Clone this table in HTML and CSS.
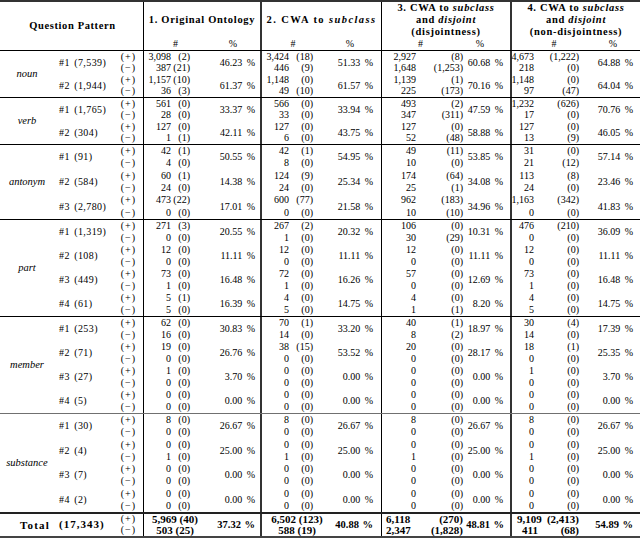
FILE: index.html
```html
<!DOCTYPE html>
<html>
<head>
<meta charset="utf-8">
<link rel="stylesheet" href="styles.css">
</head>
<body>
<div class="tbl" role="table">
<!-- header -->
<div class="qp">Question Pattern</div>
<div class="g n1"><div class="ht">1. Original Ontology</div></div>
<div class="g g2 n2"><div class="ht">2. CWA to <i>subclass</i></div></div>
<div class="g n3"><div class="ht">3. CWA to <i>subclass</i><br>and <i>disjoint</i><br>(disjointness)</div></div>
<div class="g n4"><div class="ht">4. CWA to <i>subclass</i><br>and <i>disjoint</i><br>(non-disjointness)</div></div>
<div class="hh n1 hh1">#</div><div class="hp hp1">%</div>
<div class="hh n2 hh2">#</div><div class="hp hp2">%</div>
<div class="hh n3 hh3">#</div><div class="hp hp3">%</div>
<div class="hh n4 hh4">#</div><div class="hp hp4">%</div>
<div class="hr"></div>

<!-- noun -->
<div class="cat r4">noun</div>
<div class="pat">#1 (7,539)</div><div class="sg">(+)</div><div class="n1">3,098</div><div class="p">(2)</div><div class="c1">46.23 %</div><div class="n2">3,424</div><div class="p">(18)</div><div class="c2">51.33 %</div><div class="n3">2,927</div><div class="p">(8)</div><div class="c3">60.68 %</div><div class="n4">4,673</div><div class="p">(1,222)</div><div class="c4">64.88 %</div>
<div class="sg">(−)</div><div class="n1">387</div><div class="p">(21)</div><div class="n2">446</div><div class="p">(9)</div><div class="n3">1,648</div><div class="p">(1,253)</div><div class="n4">218</div><div class="p">(0)</div>
<div class="pat">#2 (1,944)</div><div class="sg">(+)</div><div class="n1">1,157</div><div class="p">(10)</div><div class="c1">61.37 %</div><div class="n2">1,148</div><div class="p">(0)</div><div class="c2">61.57 %</div><div class="n3">1,139</div><div class="p">(1)</div><div class="c3">70.16 %</div><div class="n4">1,148</div><div class="p">(0)</div><div class="c4">64.04 %</div>
<div class="sg">(−)</div><div class="n1">36</div><div class="p">(3)</div><div class="n2">49</div><div class="p">(10)</div><div class="n3">225</div><div class="p">(173)</div><div class="n4">97</div><div class="p">(47)</div>
<div class="hr"></div>

<!-- verb -->
<div class="cat r4">verb</div>
<div class="pat">#1 (1,765)</div><div class="sg">(+)</div><div class="n1">561</div><div class="p">(0)</div><div class="c1">33.37 %</div><div class="n2">566</div><div class="p">(0)</div><div class="c2">33.94 %</div><div class="n3">493</div><div class="p">(2)</div><div class="c3">47.59 %</div><div class="n4">1,232</div><div class="p">(626)</div><div class="c4">70.76 %</div>
<div class="sg">(−)</div><div class="n1">28</div><div class="p">(0)</div><div class="n2">33</div><div class="p">(0)</div><div class="n3">347</div><div class="p">(311)</div><div class="n4">17</div><div class="p">(0)</div>
<div class="pat">#2 (304)</div><div class="sg">(+)</div><div class="n1">127</div><div class="p">(0)</div><div class="c1">42.11 %</div><div class="n2">127</div><div class="p">(0)</div><div class="c2">43.75 %</div><div class="n3">127</div><div class="p">(0)</div><div class="c3">58.88 %</div><div class="n4">127</div><div class="p">(0)</div><div class="c4">46.05 %</div>
<div class="sg">(−)</div><div class="n1">1</div><div class="p">(1)</div><div class="n2">6</div><div class="p">(0)</div><div class="n3">52</div><div class="p">(48)</div><div class="n4">13</div><div class="p">(9)</div>
<div class="hr"></div>

<!-- antonym -->
<div class="cat r6">antonym</div>
<div class="pat">#1 (91)</div><div class="sg">(+)</div><div class="n1">42</div><div class="p">(1)</div><div class="c1">50.55 %</div><div class="n2">42</div><div class="p">(1)</div><div class="c2">54.95 %</div><div class="n3">49</div><div class="p">(11)</div><div class="c3">53.85 %</div><div class="n4">31</div><div class="p">(0)</div><div class="c4">57.14 %</div>
<div class="sg">(−)</div><div class="n1">4</div><div class="p">(0)</div><div class="n2">8</div><div class="p">(0)</div><div class="n3">10</div><div class="p">(0)</div><div class="n4">21</div><div class="p">(12)</div>
<div class="pat">#2 (584)</div><div class="sg">(+)</div><div class="n1">60</div><div class="p">(1)</div><div class="c1">14.38 %</div><div class="n2">124</div><div class="p">(9)</div><div class="c2">25.34 %</div><div class="n3">174</div><div class="p">(64)</div><div class="c3">34.08 %</div><div class="n4">113</div><div class="p">(8)</div><div class="c4">23.46 %</div>
<div class="sg">(−)</div><div class="n1">24</div><div class="p">(0)</div><div class="n2">24</div><div class="p">(0)</div><div class="n3">25</div><div class="p">(1)</div><div class="n4">24</div><div class="p">(0)</div>
<div class="pat">#3 (2,780)</div><div class="sg">(+)</div><div class="n1">473</div><div class="p">(22)</div><div class="c1">17.01 %</div><div class="n2">600</div><div class="p">(77)</div><div class="c2">21.58 %</div><div class="n3">962</div><div class="p">(183)</div><div class="c3">34.96 %</div><div class="n4">1,163</div><div class="p">(342)</div><div class="c4">41.83 %</div>
<div class="sg">(−)</div><div class="n1">0</div><div class="p">(0)</div><div class="n2">0</div><div class="p">(0)</div><div class="n3">10</div><div class="p">(10)</div><div class="n4">0</div><div class="p">(0)</div>
<div class="hr"></div>

<!-- part -->
<div class="cat r8">part</div>
<div class="pat">#1 (1,319)</div><div class="sg">(+)</div><div class="n1">271</div><div class="p">(3)</div><div class="c1">20.55 %</div><div class="n2">267</div><div class="p">(2)</div><div class="c2">20.32 %</div><div class="n3">106</div><div class="p">(0)</div><div class="c3">10.31 %</div><div class="n4">476</div><div class="p">(210)</div><div class="c4">36.09 %</div>
<div class="sg">(−)</div><div class="n1">0</div><div class="p">(0)</div><div class="n2">1</div><div class="p">(0)</div><div class="n3">30</div><div class="p">(29)</div><div class="n4">0</div><div class="p">(0)</div>
<div class="pat">#2 (108)</div><div class="sg">(+)</div><div class="n1">12</div><div class="p">(0)</div><div class="c1">11.11 %</div><div class="n2">12</div><div class="p">(0)</div><div class="c2">11.11 %</div><div class="n3">12</div><div class="p">(0)</div><div class="c3">11.11 %</div><div class="n4">12</div><div class="p">(0)</div><div class="c4">11.11 %</div>
<div class="sg">(−)</div><div class="n1">0</div><div class="p">(0)</div><div class="n2">0</div><div class="p">(0)</div><div class="n3">0</div><div class="p">(0)</div><div class="n4">0</div><div class="p">(0)</div>
<div class="pat">#3 (449)</div><div class="sg">(+)</div><div class="n1">73</div><div class="p">(0)</div><div class="c1">16.48 %</div><div class="n2">72</div><div class="p">(0)</div><div class="c2">16.26 %</div><div class="n3">57</div><div class="p">(0)</div><div class="c3">12.69 %</div><div class="n4">73</div><div class="p">(0)</div><div class="c4">16.48 %</div>
<div class="sg">(−)</div><div class="n1">1</div><div class="p">(0)</div><div class="n2">1</div><div class="p">(0)</div><div class="n3">0</div><div class="p">(0)</div><div class="n4">1</div><div class="p">(0)</div>
<div class="pat">#4 (61)</div><div class="sg">(+)</div><div class="n1">5</div><div class="p">(1)</div><div class="c1">16.39 %</div><div class="n2">4</div><div class="p">(0)</div><div class="c2">14.75 %</div><div class="n3">4</div><div class="p">(0)</div><div class="c3">8.20 %</div><div class="n4">4</div><div class="p">(0)</div><div class="c4">14.75 %</div>
<div class="sg">(−)</div><div class="n1">5</div><div class="p">(0)</div><div class="n2">5</div><div class="p">(0)</div><div class="n3">1</div><div class="p">(1)</div><div class="n4">5</div><div class="p">(0)</div>
<div class="hr"></div>

<!-- member -->
<div class="cat r8">member</div>
<div class="pat">#1 (253)</div><div class="sg">(+)</div><div class="n1">62</div><div class="p">(0)</div><div class="c1">30.83 %</div><div class="n2">70</div><div class="p">(1)</div><div class="c2">33.20 %</div><div class="n3">40</div><div class="p">(1)</div><div class="c3">18.97 %</div><div class="n4">30</div><div class="p">(4)</div><div class="c4">17.39 %</div>
<div class="sg">(−)</div><div class="n1">16</div><div class="p">(0)</div><div class="n2">14</div><div class="p">(0)</div><div class="n3">8</div><div class="p">(2)</div><div class="n4">14</div><div class="p">(0)</div>
<div class="pat">#2 (71)</div><div class="sg">(+)</div><div class="n1">19</div><div class="p">(0)</div><div class="c1">26.76 %</div><div class="n2">38</div><div class="p">(15)</div><div class="c2">53.52 %</div><div class="n3">20</div><div class="p">(0)</div><div class="c3">28.17 %</div><div class="n4">18</div><div class="p">(1)</div><div class="c4">25.35 %</div>
<div class="sg">(−)</div><div class="n1">0</div><div class="p">(0)</div><div class="n2">0</div><div class="p">(0)</div><div class="n3">0</div><div class="p">(0)</div><div class="n4">0</div><div class="p">(0)</div>
<div class="pat">#3 (27)</div><div class="sg">(+)</div><div class="n1">1</div><div class="p">(0)</div><div class="c1">3.70 %</div><div class="n2">0</div><div class="p">(0)</div><div class="c2">0.00 %</div><div class="n3">0</div><div class="p">(0)</div><div class="c3">0.00 %</div><div class="n4">1</div><div class="p">(0)</div><div class="c4">3.70 %</div>
<div class="sg">(−)</div><div class="n1">0</div><div class="p">(0)</div><div class="n2">0</div><div class="p">(0)</div><div class="n3">0</div><div class="p">(0)</div><div class="n4">0</div><div class="p">(0)</div>
<div class="pat">#4 (5)</div><div class="sg">(+)</div><div class="n1">0</div><div class="p">(0)</div><div class="c1">0.00 %</div><div class="n2">0</div><div class="p">(0)</div><div class="c2">0.00 %</div><div class="n3">0</div><div class="p">(0)</div><div class="c3">0.00 %</div><div class="n4">0</div><div class="p">(0)</div><div class="c4">0.00 %</div>
<div class="sg">(−)</div><div class="n1">0</div><div class="p">(0)</div><div class="n2">0</div><div class="p">(0)</div><div class="n3">0</div><div class="p">(0)</div><div class="n4">0</div><div class="p">(0)</div>
<div class="hr lt"></div>

<!-- substance -->
<div class="cat r8">substance</div>
<div class="pat">#1 (30)</div><div class="sg">(+)</div><div class="n1">8</div><div class="p">(0)</div><div class="c1">26.67 %</div><div class="n2">8</div><div class="p">(0)</div><div class="c2">26.67 %</div><div class="n3">8</div><div class="p">(0)</div><div class="c3">26.67 %</div><div class="n4">8</div><div class="p">(0)</div><div class="c4">26.67 %</div>
<div class="sg">(−)</div><div class="n1">0</div><div class="p">(0)</div><div class="n2">0</div><div class="p">(0)</div><div class="n3">0</div><div class="p">(0)</div><div class="n4">0</div><div class="p">(0)</div>
<div class="pat">#2 (4)</div><div class="sg">(+)</div><div class="n1">0</div><div class="p">(0)</div><div class="c1">25.00 %</div><div class="n2">0</div><div class="p">(0)</div><div class="c2">25.00 %</div><div class="n3">0</div><div class="p">(0)</div><div class="c3">25.00 %</div><div class="n4">0</div><div class="p">(0)</div><div class="c4">25.00 %</div>
<div class="sg">(−)</div><div class="n1">1</div><div class="p">(0)</div><div class="n2">1</div><div class="p">(0)</div><div class="n3">1</div><div class="p">(0)</div><div class="n4">1</div><div class="p">(0)</div>
<div class="pat">#3 (7)</div><div class="sg">(+)</div><div class="n1">0</div><div class="p">(0)</div><div class="c1">0.00 %</div><div class="n2">0</div><div class="p">(0)</div><div class="c2">0.00 %</div><div class="n3">0</div><div class="p">(0)</div><div class="c3">0.00 %</div><div class="n4">0</div><div class="p">(0)</div><div class="c4">0.00 %</div>
<div class="sg">(−)</div><div class="n1">0</div><div class="p">(0)</div><div class="n2">0</div><div class="p">(0)</div><div class="n3">0</div><div class="p">(0)</div><div class="n4">0</div><div class="p">(0)</div>
<div class="pat">#4 (2)</div><div class="sg">(+)</div><div class="n1">0</div><div class="p">(0)</div><div class="c1">0.00 %</div><div class="n2">0</div><div class="p">(0)</div><div class="c2">0.00 %</div><div class="n3">0</div><div class="p">(0)</div><div class="c3">0.00 %</div><div class="n4">0</div><div class="p">(0)</div><div class="c4">0.00 %</div>
<div class="sg">(−)</div><div class="n1">0</div><div class="p">(0)</div><div class="n2">0</div><div class="p">(0)</div><div class="n3">0</div><div class="p">(0)</div><div class="n4">0</div><div class="p">(0)</div>
<div class="hr tk"></div>

<!-- total -->
<div class="cat-t">Total</div>
<div class="pat b tpat">(17,343)</div><div class="sg">(+)</div><div class="n1 k2 t1 b">5,969 (40)</div><div class="c1 b tp">37.32 %</div><div class="n2 k2 t2 b">6,502 (123)</div><div class="c2 b tp">40.88 %</div><div class="n3 k2 tt3 b"><span>6,118</span><span>(270)</span></div><div class="c3 b tp">48.81 %</div><div class="n4 k2 tt4 b"><span>9,109</span><span>(2,413)</span></div><div class="c4 b tp">54.89 %</div>
<div class="sg">(−)</div><div class="n1 k2 t1 b">503 (25)</div><div class="n2 k2 t2 b">588 (19)</div><div class="n3 k2 tt3 b"><span>2,347</span><span>(1,828)</span></div><div class="n4 k2 tt4 tt4b b"><span>411</span><span>(68)</span></div>
</div>
</body>
</html>
```

FILE: styles.css
```css
html, body {
  margin: 0;
  padding: 0;
  background: #fff;
}
body {
  width: 640px;
  height: 538px;
  overflow: hidden;
  font-family: "Liberation Serif", "Times New Roman", serif;
  color: #000;
}
.tbl {
  display: grid;
  width: 640px;
  grid-template-columns: 54px 58px 31px 28px 21px 68px 29px 26px 66px 35px 49px 45px 24px 47px 59px;
  grid-template-rows:
    36px 12px 1px
    repeat(4, 11.5px) 1px
    repeat(4, 11.5px) 1px
    repeat(6, 12.33px) 1px
    repeat(8, 12px) 1px
    repeat(8, 12px) 1px
    repeat(8, 12.25px) 2px
    11px 11px;
  border-top: 2px solid #333;
  border-bottom: 2px solid #444;
  font-size: 10px;
  line-height: 12px;
}
.tbl > div {
  display: flex;
  align-items: center;
  box-sizing: border-box;
  white-space: nowrap;
  min-width: 0;
}

/* rules */
.tbl > .hr {
  grid-column: 1 / -1;
  background: #000;
}
.tbl > .hr.lt { background: #707070; }
.tbl > .hr.tk { background: #222; }

/* body cells */
.cat {
  justify-content: center;
  font-style: italic;
  font-size: 10.5px;
}
.r4 { grid-row: span 4; }
.r6 { grid-row: span 6; }
.r8 { grid-row: span 8; }
.pat {
  grid-row: span 2;
  justify-content: flex-start;
  padding-left: 5px;
  letter-spacing: 0.4px;
  word-spacing: 1.5px;
}
.sg {
  justify-content: flex-end;
  padding-right: 7px;
  letter-spacing: 1px;
}
.n1, .n2, .n3, .n4 { justify-content: flex-end; }
.n1, .n3 { border-left: 1px solid #000; }
.n2, .n4 { border-left: 2px solid #333; }
.p { justify-content: flex-end; padding-right: 2px; }
.c1, .c2, .c3, .c4 {
  grid-row: span 2;
  justify-content: flex-end;
  word-spacing: 2px;
}
.c1 { padding-right: 5px; }
.c2 { padding-right: 8px; }
.c3 { padding-right: 7px; }
.c4 { padding-right: 7px; }

/* total */
.cat-t {
  grid-row: span 2;
  justify-content: center;
  font-weight: bold;
  font-size: 11px;
  letter-spacing: 1.2px;
  padding-left: 16px;
}
.b { font-weight: bold; font-size: 11px; line-height: 11px; }
.tbl > .tpat { letter-spacing: 1px; }
.k2 { grid-column: span 2; }
.tbl > .t1 { justify-content: center; padding-left: 14px; }
.tbl > .t2 { justify-content: center; padding-left: 17px; }
.tbl > .tt3 { justify-content: space-between; padding-left: 4px; padding-right: 2px; }
.tbl > .tt4 { justify-content: space-between; padding-left: 5px; padding-right: 2px; }
.tbl > .tt4b { padding-left: 10px; }
.tbl > .tp { font-size: 10.5px; word-spacing: 1px; }
.tbl > .c3.tp { padding-right: 6px; }

/* header */
.qp {
  grid-column: span 3;
  grid-row: span 2;
  justify-content: center;
  font-weight: bold;
  font-size: 10.5px;
  letter-spacing: 0.6px;
  padding-left: 2px;
}
.tbl > .g {
  grid-column: span 3;
  justify-content: center;
  font-weight: bold;
  font-size: 10.5px;
  letter-spacing: 0.7px;
}
.tbl > .g2 { letter-spacing: 1.4px; }
.ht { text-align: center; }
.tbl > .hh { grid-column: span 2; justify-content: center; }
.tbl > .hp { justify-content: center; }
.hh1 { padding-left: 15px; }
.hp1 { padding-left: 14px; }
.hh2 { padding-left: 9px; }
.hp2 { padding-left: 4px; }
.hh3 { padding-right: 6px; }
.hp3 { padding-right: 15px; }
.hh4 { padding-left: 15px; }
.hp4 { padding-left: 5px; }
```
